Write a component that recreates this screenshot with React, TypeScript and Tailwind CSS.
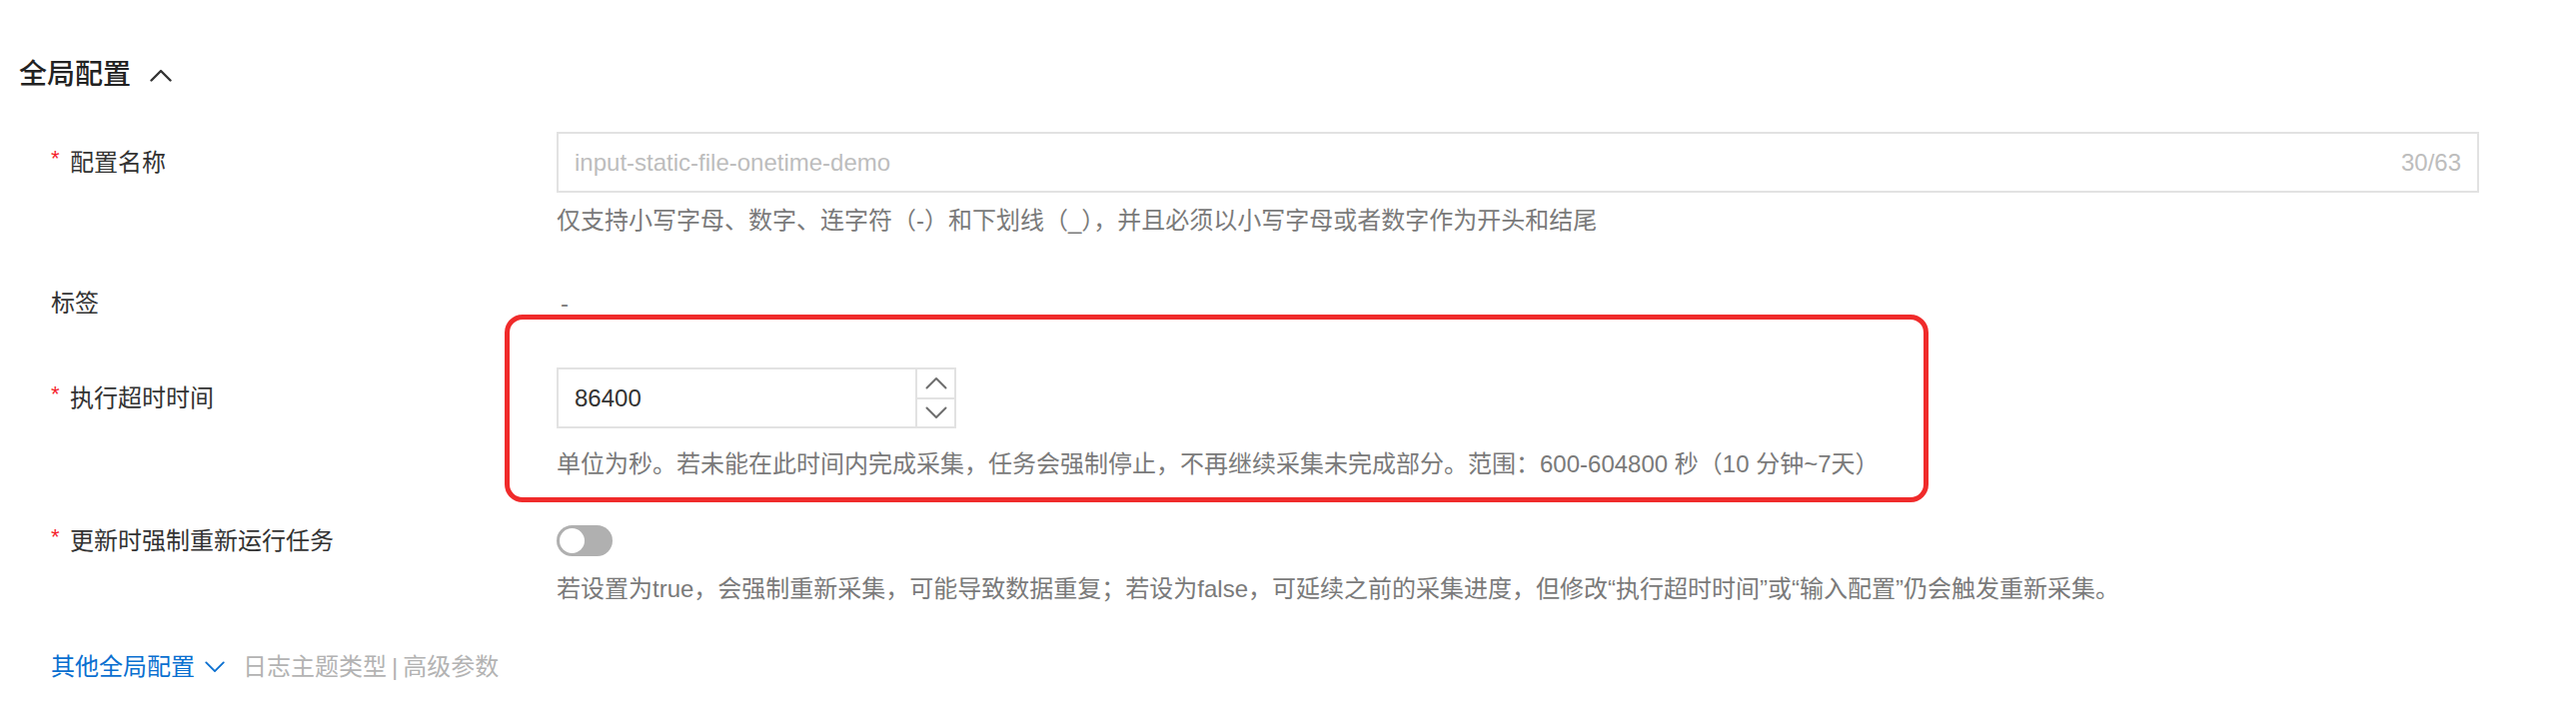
import React from "react";

const FONT = '"Liberation Sans", "Noto Sans CJK SC", sans-serif';

function ChevronUp({ className = "", color = "#333", w = 22, h = 13, sw = 2.4 }) {
  return (
    <svg className={className} width={w} height={h} viewBox="0 0 22 13" fill="none">
      <path d="M1.5 11.5 L11 2 L20.5 11.5" stroke={color} strokeWidth={sw} strokeLinecap="round" strokeLinejoin="round" />
    </svg>
  );
}

function ChevronDown({ className = "", color = "#333", w = 22, h = 13, sw = 2.4 }) {
  return (
    <svg className={className} width={w} height={h} viewBox="0 0 22 13" fill="none">
      <path d="M1.5 1.5 L11 11 L20.5 1.5" stroke={color} strokeWidth={sw} strokeLinecap="round" strokeLinejoin="round" />
    </svg>
  );
}

function Label({ text, required }: { text: string; required?: boolean }) {
  return (
    <div className="w-[506px] shrink-0 h-[61px] flex items-center text-[24px] text-[#333] leading-none">
      {required && (
        <span className="inline-block w-[19px] text-[#f5222d] text-[22px] relative -top-[4px]">*</span>
      )}
      <span>{text}</span>
    </div>
  );
}

export default function App() {
  return (
    <div className="w-full h-[704px] bg-white overflow-hidden" style={{ fontFamily: FONT }}>
      <div className="pl-[19px] pr-[97px]">
        {/* Title */}
        <div className="mt-[55px] h-[40px] flex items-center gap-[19px]">
          <span className="text-[28px] font-medium text-[#222] leading-[40px]">全局配置</span>
          <ChevronUp color="#333" />
        </div>

        <div className="pl-[32px]">
          {/* Row 1 */}
          <div className="mt-[37px] flex">
            <Label text="配置名称" required />
            <div className="flex-1">
              <div className="h-[61px] border-2 border-[#e2e2e2] flex items-center justify-between pl-[16px] pr-[16px] text-[24px]">
                <span className="text-[#bdbdbd]">input-static-file-onetime-demo</span>
                <span className="text-[#bdbdbd]">30/63</span>
              </div>
              <div className="mt-[10px] leading-[36px] text-[24px] text-[#7a7a7a]">
                仅支持小写字母、数字、连字符（-）和下划线（_），并且必须以小写字母或者数字作为开头和结尾
              </div>
            </div>
          </div>

          {/* Row 2 */}
          <div className="mt-[34px] flex">
            <Label text="标签" />
            <div className="flex-1 h-[61px] flex items-center pl-[4px] text-[24px] text-[#808080]">-</div>
          </div>

          {/* Row 3 */}
          <div className="mt-[34px] flex">
            <Label text="执行超时时间" required />
            <div className="flex-1 relative">
              <div className="absolute left-[-52px] top-[-53px] w-[1425px] h-[188px] border-[5px] border-[#f02b2b] rounded-[18px] pointer-events-none" />
              <div className="w-[400px] h-[61px] border-2 border-[#e2e2e2] flex">
                <div className="flex-1 flex items-center pl-[16px] text-[24px] text-[#333]">86400</div>
                <div className="w-[39px] flex flex-col border-l-2 border-[#e2e2e2]">
                  <div className="flex-1 flex items-center justify-center border-b-2 border-[#e2e2e2]">
                    <ChevronUp color="#6e6e6e" w={22} h={13} sw={2} />
                  </div>
                  <div className="flex-1 flex items-center justify-center">
                    <ChevronDown color="#6e6e6e" w={22} h={13} sw={2} />
                  </div>
                </div>
              </div>
              <div className="mt-[18px] leading-[36px] text-[24px] text-[#7a7a7a]">
                单位为秒。若未能在此时间内完成采集，任务会强制停止，不再继续采集未完成部分。范围：600-604800 秒（10 分钟~7天）
              </div>
            </div>
          </div>

          {/* Row 4 */}
          <div className="mt-[28px] flex">
            <Label text="更新时强制重新运行任务" required />
            <div className="flex-1">
              <div className="h-[61px] flex items-center">
                <div className="w-[56px] h-[31px] rounded-full bg-[#b0b0b0] flex items-center">
                  <div className="w-[25px] h-[25px] rounded-full bg-white ml-[3px]" />
                </div>
              </div>
              <div className="leading-[36px] text-[24px] text-[#7a7a7a]">
                若设置为true，会强制重新采集，可能导致数据重复；若设为false，可延续之前的采集进度，但修改“执行超时时间”或“输入配置”仍会触发重新采集。
              </div>
            </div>
          </div>

          {/* Link */}
          <div className="mt-[42px] h-[36px] flex items-center text-[24px]">
            <span className="text-[#0a6fd0]">其他全局配置</span>
            <ChevronDown className="ml-[9px]" color="#0a6fd0" w={22} h={12} sw={2} />
            <span className="ml-[17px] text-[#b3b3b3]">日志主题类型</span>
            <span className="mx-[5px] text-[#b3b3b3]">|</span>
            <span className="text-[#b3b3b3]">高级参数</span>
          </div>
        </div>
      </div>
    </div>
  );
}
